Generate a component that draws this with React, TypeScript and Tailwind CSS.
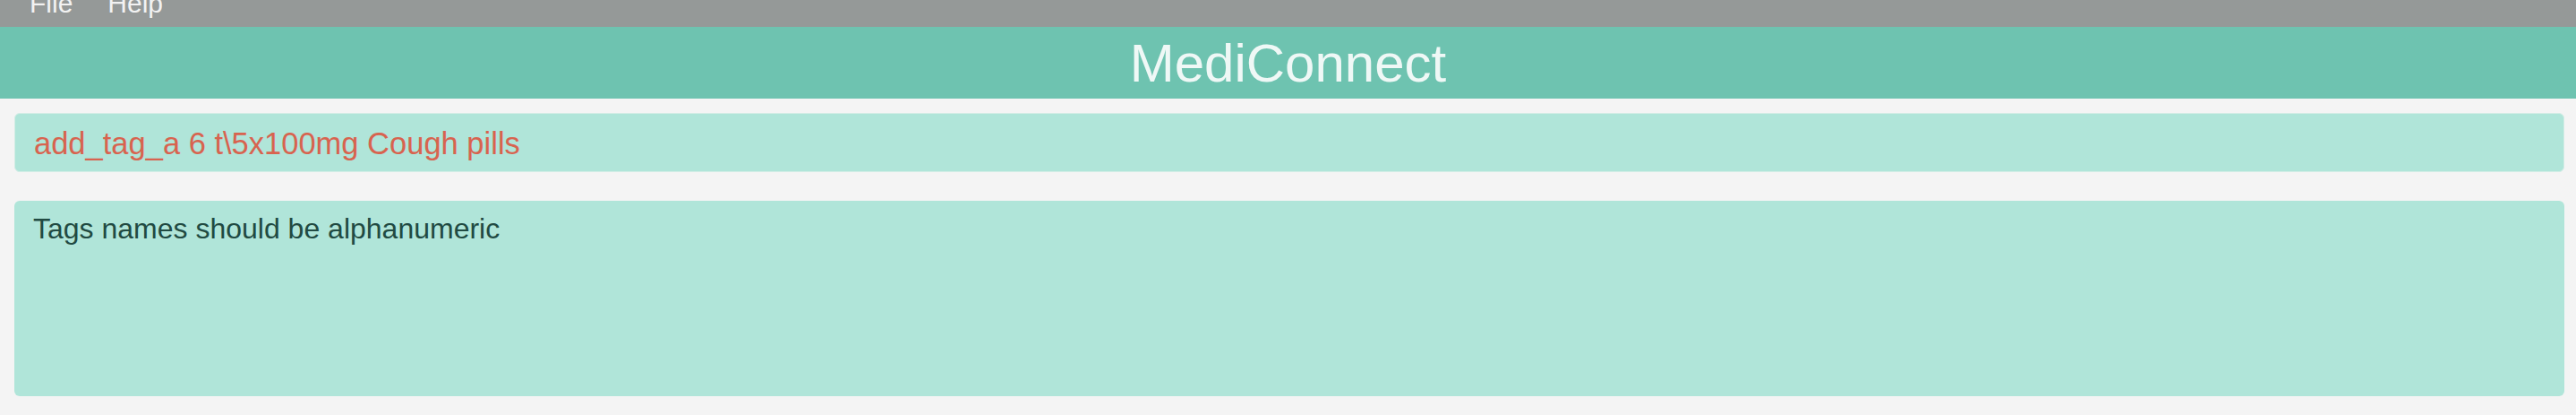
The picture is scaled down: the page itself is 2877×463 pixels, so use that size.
import React from "react"

const MenuBar = () => (
  <div className="h-[30px] overflow-hidden bg-[#959998] flex items-start pl-[33px] gap-[39px] text-[30px] leading-none text-[#f2f2f2]">
    <span className="-mt-[11px]">File</span>
    <span className="-mt-[11px]">Help</span>
  </div>
)

const Header = () => (
  <div className="h-[80px] bg-[#6ec3b0] pt-[11px] text-center text-[60px] leading-none text-[#eff8f6]">
    MediConnect
  </div>
)

const CommandBox = ({ command }: { command: string }) => (
  <div className="h-[66px] rounded-[6px] border border-[#d3ede6] bg-[#b0e5d9] pt-[16px] pl-[21px] text-[34.5px] leading-none text-[#d8634f] whitespace-pre">
    {command}
  </div>
)

const ResultBox = ({ message }: { message: string }) => (
  <div className="h-[218px] rounded-[6px] bg-[#b0e5d9] pt-[15px] pl-[21px] text-[32px] leading-none text-[#214a42]">
    {message}
  </div>
)

export default function App() {
  return (
    <div className="min-h-[463px] bg-[#f4f4f4] font-['Liberation_Sans',Arial,sans-serif]">
      <MenuBar />
      <Header />
      <div className="flex flex-col gap-[32px] pt-[16px] pl-4 pr-[13px]">
        <CommandBox command={"add_tag_a 6 t\\5x100mg Cough pills"} />
        <ResultBox message="Tags names should be alphanumeric" />
      </div>
    </div>
  )
}
